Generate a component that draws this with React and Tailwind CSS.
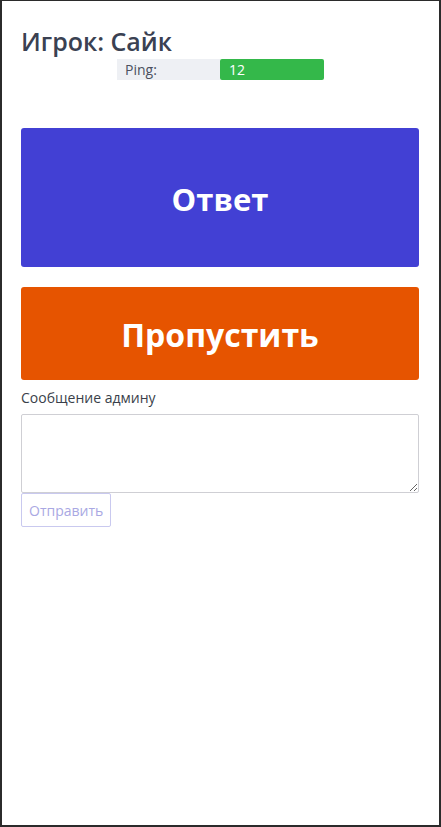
import React, { useState } from "react";

function App() {
  const [message, setMessage] = useState("");

  return (
    <div
      className="h-[827px] w-[441px] border-x-2 border-t border-b-2 border-[#2b2b2b] bg-white"
      style={{ fontFamily: '"Open Sans", "Noto Sans", sans-serif' }}
    >
      <div className="pl-[19px] pr-[20px] pt-[24px]">
        {/* Player header */}
        <h1 className="text-[25px] leading-[32px] font-semibold text-[#3a4152]">
          Игрок: Сайк
        </h1>
        <div className="mt-[2px] flex h-[21px] w-[207px] ml-[96px] text-[14px] leading-[21px]">
          <div className="w-[103px] bg-[#eef0f4] pl-[8px] text-[#4b5060]">Ping:</div>
          <div className="w-[104px] rounded-[2px] bg-[#34b84a] pl-[9px] text-white">12</div>
        </div>

        {/* Action buttons */}
        <button
          type="button"
          className="mt-[48px] flex h-[139px] w-full items-center justify-center rounded-[3px] bg-[#4240d4] pt-[4px] text-[31px] font-bold text-white"
        >
          Ответ
        </button>
        <button
          type="button"
          className="mt-[20px] flex h-[93px] w-full items-center justify-center rounded-[3px] bg-[#e65400] pt-[2px] text-[32px] font-bold text-white"
        >
          Пропустить
        </button>

        {/* Message to admin */}
        <label className="mt-[8px] block text-[14px] leading-[20px] text-[#3a3f4a]">
          Сообщение админу
        </label>
        <textarea
          value={message}
          onChange={(e) => setMessage(e.target.value)}
          className="mt-[6px] block h-[79px] w-full rounded-[2px] border border-[#cfcfd4] outline-none"
        />
        <button
          type="button"
          className="block h-[34px] rounded-[2px] border border-[#c9c9ef] px-[7px] text-[14px] text-[#a9a8e3]"
        >
          Отправить
        </button>
      </div>
    </div>
  );
}

export default App;
